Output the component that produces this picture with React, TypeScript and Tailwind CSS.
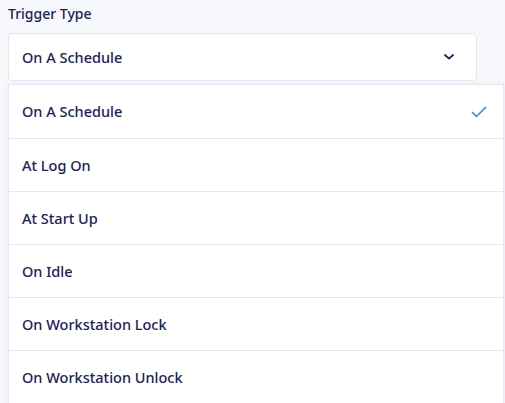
import React from "react";

const items = [
  "On A Schedule",
  "At Log On",
  "At Start Up",
  "On Idle",
  "On Workstation Lock",
  "On Workstation Unlock",
];

export default function App() {
  return (
    <div
      className="w-[505px] h-[403px] overflow-hidden bg-[#f7f8fc] text-[#1c2155] relative"
      style={{ fontFamily: '"Noto Sans", "Open Sans", sans-serif' }}
    >
      <div className="pl-2 pt-[4px] text-[14px] font-medium leading-[20px]">Trigger Type</div>
      <div className="ml-2 mt-[9px] w-[469px] h-[48px] bg-white border border-[#e4e6ee] rounded-[4px] flex items-center pl-[13px] pr-[20px]">
        <span className="text-[14.5px] leading-[20px] font-medium flex-1 pb-px">On A Schedule</span>
        <svg width="10" height="6" viewBox="0 0 10 6" className="mr-[2px]">
          <path d="M1 1 L5 4.6 L9 1" fill="none" stroke="#1c2155" strokeWidth="1.8" strokeLinecap="round" strokeLinejoin="round" />
        </svg>
      </div>
      <div className="absolute left-2 top-[84px] w-[496px] bg-white border border-[#e6e7ee] shadow-[0_2px_8px_rgba(30,40,120,0.08)]">
        {items.map((it, i) => (
          <div
            key={it}
            className={`h-[53px] flex items-center pl-[13px] pr-[16px] text-[14.5px] leading-[20px] font-medium ${i > 0 ? "border-t border-[#e6e7ec]" : ""}`}
          >
            <span className="flex-1 pb-px">{it}</span>
            {i === 0 && (
              <svg width="16" height="12" viewBox="0 0 16 12">
                <path d="M1 6 L5.5 10.5 L15 1" fill="none" stroke="#2f80f7" strokeWidth="1.5" />
              </svg>
            )}
          </div>
        ))}
      </div>
    </div>
  );
}
